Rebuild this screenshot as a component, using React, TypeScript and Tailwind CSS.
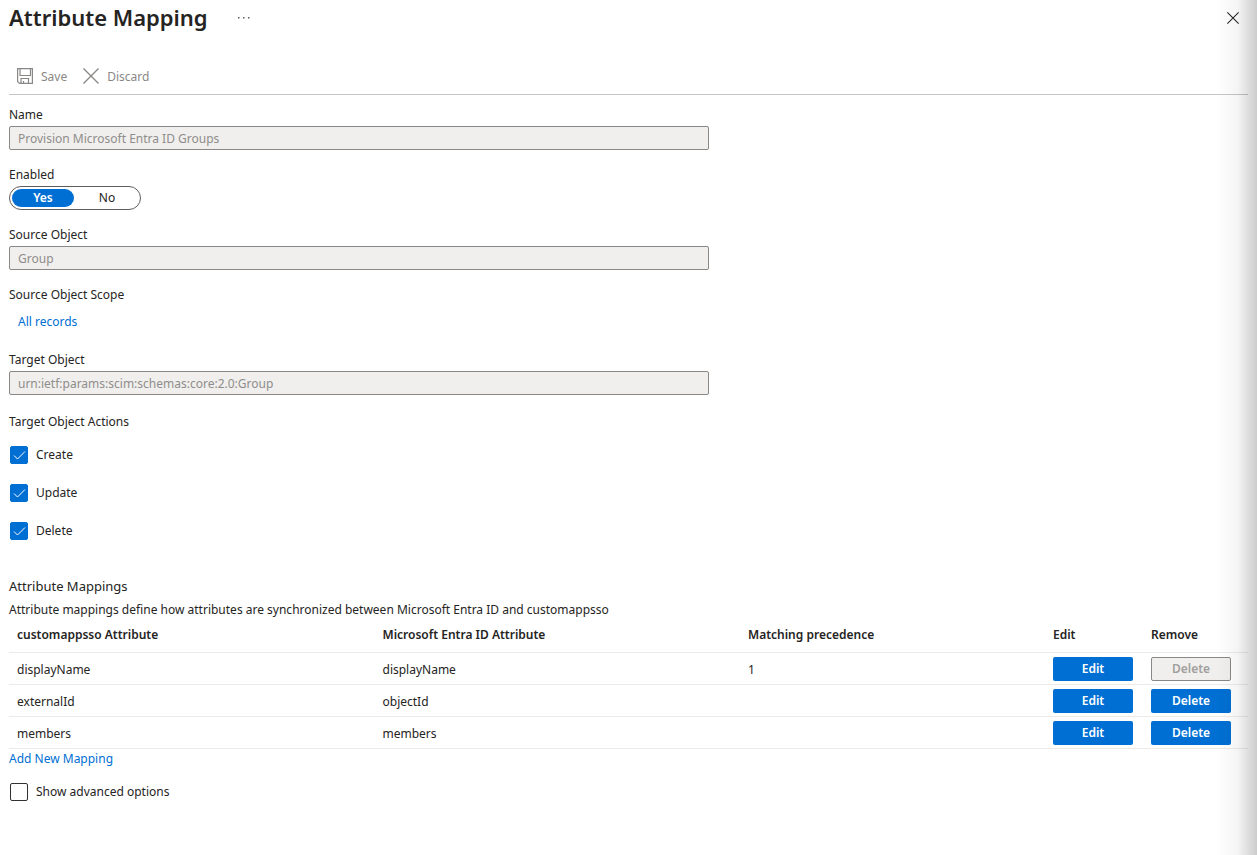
import { useState } from "react";

const mappings = [
  { target: "displayName", source: "displayName", precedence: "1", locked: true },
  { target: "externalId", source: "objectId", precedence: "", locked: false },
  { target: "members", source: "members", precedence: "", locked: false },
];

const SaveIcon = () => (
  <svg viewBox="0 0 16 16" className="size-4" fill="none" stroke="#8a8886" strokeWidth="1.2" aria-hidden="true">
    <path d="M0.6 0.6h14.8v14.8H2.6l-2-2z" />
    <path d="M3 0.6v6.9h10.5V0.6" />
    <path d="M4 15.4v-4.9h7.5v4.9M6.5 15.4v-2.4" />
  </svg>
);

const CrossIcon = ({ className }: { className: string }) => (
  <svg viewBox="0 0 16 16" className={className} fill="none" stroke="currentColor" strokeWidth="1.4" aria-hidden="true">
    <path d="M0.5 0.5l15 15M15.5 0.5l-15 15" />
  </svg>
);

const ReadOnlyField = ({ id, label, value }: { id: string; label: string; value: string }) => (
  <div className="flex flex-col gap-px">
    <label htmlFor={id} className="h-5">{label}</label>
    <input
      id={id}
      type="text"
      value={value}
      disabled
      className="h-6 w-full max-w-[700px] rounded-xs border border-[#8a8886] bg-[#f0efed] px-2 text-[#8f8d8b]"
    />
  </div>
);

const CheckBox = ({ label, initial = false }: { label: string; initial?: boolean }) => {
  const [checked, setChecked] = useState(initial);

  return (
    <label className="flex h-5 w-fit items-center gap-2 pl-px">
      <span className="grid size-[18px]">
        <input
          type="checkbox"
          checked={checked}
          onChange={() => setChecked(!checked)}
          className="col-start-1 row-start-1 size-[18px] appearance-none rounded-xs border border-[#323130] checked:border-[#006fd3] checked:bg-[#006fd3]"
        />
        {checked && (
          <svg viewBox="0 0 18 18" className="pointer-events-none col-start-1 row-start-1 size-[18px]" fill="none" stroke="white" aria-hidden="true">
            <path d="M4 9.5l3.5 3.5L15 5.5" />
          </svg>
        )}
      </span>
      {label}
    </label>
  );
};

const EnabledToggle = () => {
  const [enabled, setEnabled] = useState("Yes");

  return (
    <fieldset>
      <legend className="mb-px h-5">Enabled</legend>
      <div className="flex h-6 w-[132px] gap-0.5 rounded-full border border-[#605e5c] p-0.5">
        {["Yes", "No"].map((option) => (
          <label
            key={option}
            className="flex flex-1 items-center justify-center rounded-full has-checked:bg-[#006fd3] has-checked:font-semibold has-checked:text-white"
          >
            <input
              type="radio"
              name="enabled"
              value={option}
              checked={enabled === option}
              onChange={() => setEnabled(option)}
              className="sr-only"
            />
            {option}
          </label>
        ))}
      </div>
    </fieldset>
  );
};

const MappingTable = () => (
  <table className="w-full table-fixed border-collapse text-left">
    <colgroup>
      <col />
      <col />
      <col className="w-[305px]" />
      <col className="w-[98px]" />
      <col className="w-[105px]" />
    </colgroup>
    <thead>
      <tr className="h-8 border-b border-[#edebe9]">
        {["customappsso Attribute", "Microsoft Entra ID Attribute", "Matching precedence", "Edit", "Remove"].map((heading) => (
          <th key={heading} scope="col" className="px-2 pb-0.5 font-semibold">{heading}</th>
        ))}
      </tr>
    </thead>
    <tbody>
      {mappings.map(({ target, source, precedence, locked }) => (
        <tr key={target} className="h-8 border-b border-[#edebe9]">
          <td className="px-2 pt-1">{target}</td>
          <td className="px-2 pt-1">{source}</td>
          <td className="px-2 pt-1">{precedence}</td>
          <td className="px-2 pt-0.5">
            <button type="button" className="block h-6 w-20 rounded-xs bg-[#006fd3] font-semibold text-white">Edit</button>
          </td>
          <td className="px-2 pt-0.5">
            <button
              type="button"
              disabled={locked}
              className="block h-6 w-20 rounded-xs bg-[#006fd3] font-semibold text-white disabled:border disabled:border-[#8a8886] disabled:bg-[#f0efed] disabled:text-[#a19f9d]"
            >
              Delete
            </button>
          </td>
        </tr>
      ))}
    </tbody>
  </table>
);

export default function App() {
  return (
    <main className="relative min-h-screen bg-white px-[9px] pb-8 font-['Noto_Sans','Open_Sans',sans-serif] text-xs leading-5 text-[#252423]">
      <header className="flex h-9 items-center">
        <h1 className="pb-0.5 text-[22px] font-semibold">Attribute Mapping</h1>
        <button type="button" aria-label="More" className="ml-[26px] flex h-5 w-5 items-center justify-center text-[#605e5c]">
          <svg viewBox="0 0 12 2" className="h-0.5 w-3" fill="currentColor" aria-hidden="true">
            <path d="M0 0h1.5v1.5H0zM5 0h1.5v1.5H5zM10 0h1.5v1.5H10z" />
          </svg>
        </button>
        <button type="button" aria-label="Close" className="mr-[9px] ml-auto">
          <CrossIcon className="size-3" />
        </button>
      </header>

      <div className="mt-[22px] flex h-[37px] items-center gap-4 border-b border-[#c8c6c4] pl-2 text-[#8a8886]">
        <button type="button" disabled className="flex items-center gap-2">
          <SaveIcon />
          <span className="pt-0.5">Save</span>
        </button>
        <button type="button" disabled className="flex items-center gap-2">
          <CrossIcon className="size-4" />
          <span className="pt-0.5">Discard</span>
        </button>
      </div>

      <form className="flex flex-col gap-[15px] pt-2.5">
        <ReadOnlyField id="name" label="Name" value="Provision Microsoft Entra ID Groups" />
        <EnabledToggle />
        <ReadOnlyField id="source" label="Source Object" value="Group" />
        <div className="pb-[3px]">
          <p>Source Object Scope</p>
          <a href="#scope" className="mt-[7px] ml-[9px] block w-fit text-[#006fd3]">All records</a>
        </div>
        <ReadOnlyField id="target" label="Target Object" value="urn:ietf:params:scim:schemas:core:2.0:Group" />
        <fieldset className="mt-0.5">
          <legend>Target Object Actions</legend>
          <div className="flex flex-col gap-[18px] pt-[13px]">
            <CheckBox label="Create" initial />
            <CheckBox label="Update" initial />
            <CheckBox label="Delete" initial />
          </div>
        </fieldset>
      </form>

      <section className="pt-[35px]">
        <h2 className="mb-1 h-5 text-[13px]">Attribute Mappings</h2>
        <p>Attribute mappings define how attributes are synchronized between Microsoft Entra ID and customappsso</p>
        <MappingTable />
        <a href="#add" className="block w-fit text-[#006fd3]">Add New Mapping</a>
        <div className="pt-[13px]">
          <CheckBox label="Show advanced options" />
        </div>
      </section>

      {/* shade cast by the panel to the right */}
      <div className="pointer-events-none absolute inset-y-0 right-0 w-10 bg-linear-to-r from-transparent via-black/4 to-black/20" />
    </main>
  );
}
